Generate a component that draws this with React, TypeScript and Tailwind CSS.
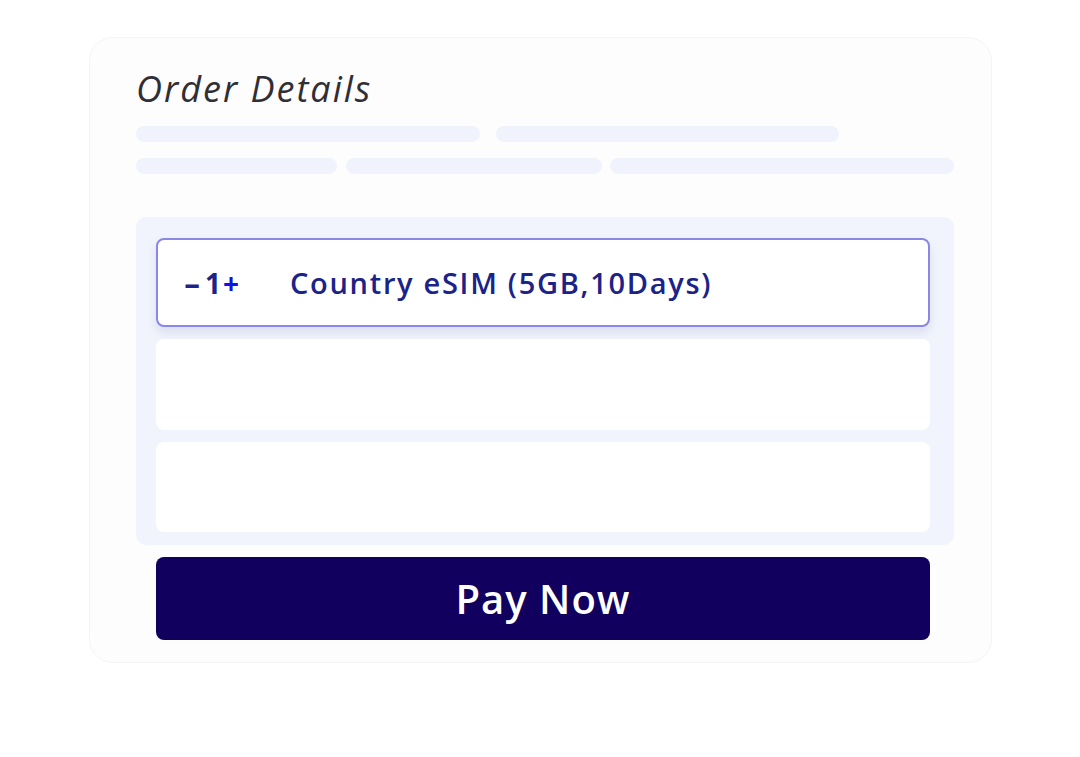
import React from "react";

export default function App() {
  const font = { fontFamily: '"Open Sans", "Noto Sans", sans-serif' };
  return (
    <div className="w-[1080px] h-[757px] bg-white pt-[37px] pl-[89px]" style={font}>
      <div className="w-[903px] h-[626px] rounded-[24px] border border-[#f4f4f7] bg-[#fdfdfe] pl-[46px] pt-[25px]">
        <h1 className="h-[52px] text-[36px] leading-[52px] italic font-normal text-[#2f2f35] tracking-[2px]">
          Order Details
        </h1>
        <div className="mt-[11px] flex gap-[16px]">
          <div className="w-[344px] h-[16px] rounded-full bg-[#f0f3fc]" />
          <div className="w-[343px] h-[16px] rounded-full bg-[#f0f3fc]" />
        </div>
        <div className="mt-[16px] flex">
          <div className="w-[201px] h-[16px] rounded-full bg-[#f0f3fc]" />
          <div className="ml-[9px] w-[256px] h-[16px] rounded-full bg-[#f0f3fc]" />
          <div className="ml-[8px] w-[344px] h-[16px] rounded-full bg-[#f0f3fc]" />
        </div>
        <div className="mt-[43px] w-[818px] h-[328px] rounded-[10px] bg-[#f1f4fc] pl-[20px] pr-[24px] pt-[21px] flex flex-col gap-[12px]">
          <div className="h-[89px] rounded-[8px] border-2 border-[#8a87e6] bg-white flex items-center shadow-[0_6px_10px_rgba(180,185,215,0.35)]">
            <div className="ml-[26px] w-[106px] flex items-center text-[28px] font-bold">
              <span className="inline-block w-[21px] scale-x-[1.8] origin-left text-[#1e2387]">-</span>
              <span className="inline-block w-[18px] text-[#1e2387]">1</span>
              <span className="text-[#1010ee]">+</span>
            </div>
            <span className="text-[29px] font-semibold text-[#1c2388] tracking-[1.7px]">
              Country eSIM (5GB,10Days)
            </span>
          </div>
          <div className="h-[91px] rounded-[8px] bg-white" />
          <div className="h-[90px] rounded-[8px] bg-white" />
        </div>
        <button className="mt-[12px] ml-[20px] w-[774px] h-[83px] rounded-[8px] bg-[#12005e] text-white text-[40px] font-semibold tracking-[1px] flex items-center justify-center">
          Pay Now
        </button>
      </div>
    </div>
  );
}
